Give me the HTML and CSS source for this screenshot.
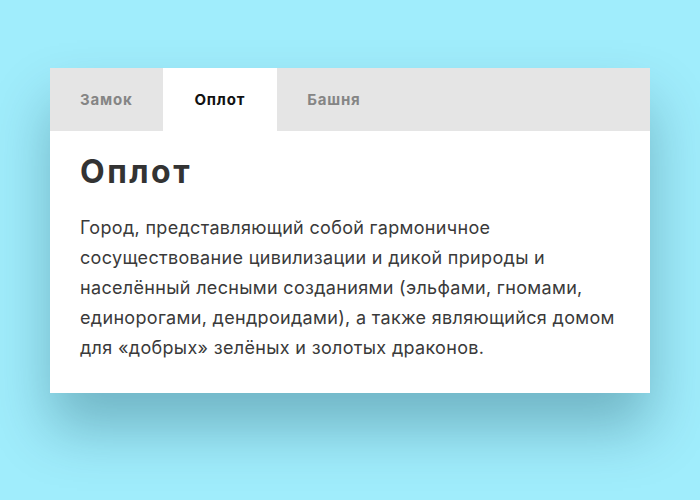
FILE: index.html
```html
<!DOCTYPE html>
<html lang="ru">
<head>
<meta charset="utf-8">
<link rel="stylesheet" href="styles.css">
</head>
<body>
<div class="card">
  <div class="tabs">
    <div class="tab">Замок</div>
    <div class="tab active">Оплот</div>
    <div class="tab">Башня</div>
  </div>
  <div class="content">
    <h1 class="title">Оплот</h1>
    <p class="text">Город, представляющий собой гармоничное сосуществование цивилизации и дикой природы и населённый лесными созданиями (эльфами, гномами, единорогами, дендроидами), а также являющийся домом для «добрых» зелёных и золотых драконов.</p>
  </div>
</div>
</body>
</html>
```
FILE: styles.css
```css
html, body {
  margin: 0;
  padding: 0;
}
body {
  width: 700px;
  height: 500px;
  background: #a0edfc;
  font-family: Inter, "Noto Sans", sans-serif;
  padding-top: 68px;
  box-sizing: border-box;
}
.card {
  width: 600px;
  margin-left: 50px;
  background: #fff;
  box-shadow: 0 35px 55px rgba(0, 50, 70, 0.3);
}
.tabs {
  display: flex;
  background: #e5e5e5;
  height: 63px;
}
.tab {
  display: flex;
  align-items: center;
  justify-content: center;
  padding: 0 30px;
  font-size: 15px;
  font-weight: 700;
  letter-spacing: 0.8px;
  color: #858585;
}
.tab.active {
  background: #fff;
  color: #111;
  padding: 0 32px;
}
.content {
  padding: 23px 30px 30px;
}
.title {
  margin: 0 0 23px;
  font-size: 32px;
  line-height: 36px;
  font-weight: 700;
  letter-spacing: 2.5px;
  color: #333;
}
.text {
  margin: 0;
  font-size: 18px;
  line-height: 30px;
  letter-spacing: 0.32px;
  color: #3a3a3a;
}
```
